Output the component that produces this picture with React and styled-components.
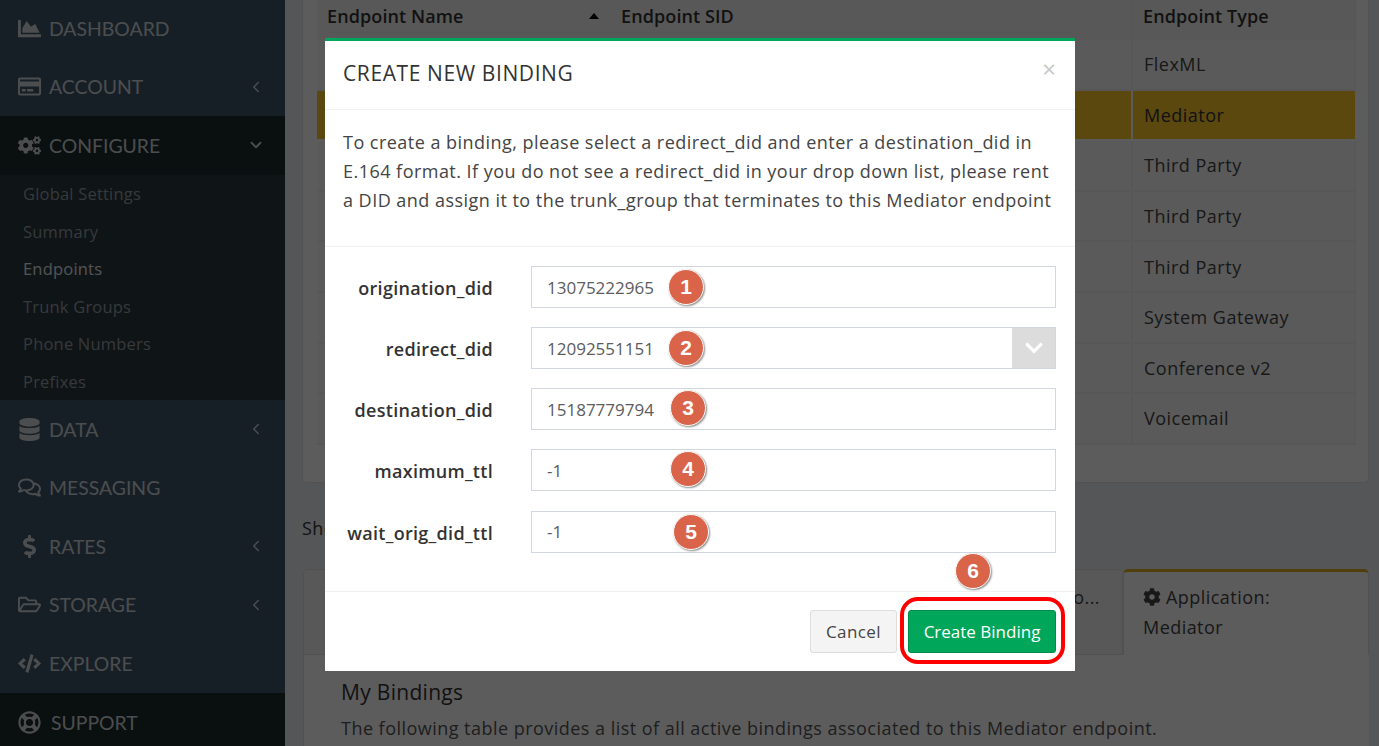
import React from 'react';
import styled, { createGlobalStyle } from 'styled-components';
import {
  FaChartArea, FaRegCreditCard, FaCogs, FaDatabase, FaRegComments, FaDollarSign,
  FaRegFolderOpen, FaCode, FaRegLifeRing, FaCog, FaChevronDown,
} from 'react-icons/fa';
import { ChevronLeft, ChevronDown } from 'lucide-react';

const Global = createGlobalStyle`
  html, body { margin: 0; height: 100%; overflow: hidden; }
  body { font-family: "Open Sans", Lato, sans-serif; color: #333; background: #eceef1; }
  * { box-sizing: border-box; }
`;

const Page = styled.div`
  display: flex;
  height: 746px;
  overflow: hidden;
`;

const Sidebar = styled.nav`
  width: 285px;
  flex: none;
  height: 747px;
  background: #405669;
  display: flex;
  flex-direction: column;
  margin-top: -1px;
`;

const NavItem = styled.div`
  height: 58.6px;
  flex: none;
  display: flex;
  align-items: center;
  padding: 0 20px 0 18px;
  color: #d0d6da;
  font-family: Lato, sans-serif;
  font-size: 19.4px;
  background: ${(p) => (p.$dark ? '#1e2a2d' : 'transparent')};
`;

const NavIcon = styled.span`
  width: ${(p) => p.$w || 31}px;
  display: flex;
  font-size: 23px;
  svg { display: block; }
`;

const NavLabel = styled.span`
  flex: 1;
`;

const SubList = styled.div`
  background: #2a383f;
  height: 225px;
  flex: none;
`;

const SubItem = styled.div`
  height: 37.5px;
  display: flex;
  align-items: center;
  padding-left: 23px;
  font-size: 16.5px;
  letter-spacing: 0.2px;
  color: ${(p) => (p.$active ? '#e4e6e8' : '#969fa4')};
`;

const Main = styled.main`
  flex: 1;
  min-width: 0;
  padding: 0 10px 0 17px;
`;

const Card = styled.section`
  background: #fff;
  height: 483px;
  border-radius: 0 0 5px 5px;
  border: 1px solid #e4e4e4;
  border-top: 0;
  padding: 0 12px 0 14px;
`;

const Table = styled.div`
  display: grid;
  grid-template-columns: 294px 522px 223px;
`;

const HeadCell = styled.div`
  height: 40px;
  padding: 0 10px 8px;
  display: flex;
  align-items: center;
  justify-content: space-between;
  font-weight: 600;
  font-size: 18px;
  letter-spacing: 0.1px;
  color: #333;
  background: #f4f4f4;
  border-right: 1px solid #eeeeee;
`;

const Sort = styled.span`
  width: 0;
  height: 0;
  border-left: 5px solid transparent;
  border-right: 5px solid transparent;
  border-bottom: 6px solid #000;
  margin-right: 1px;
`;

const Cell = styled.div`
  height: 50.6px;
  padding: 0 11px;
  display: flex;
  align-items: center;
  font-size: 18px;
  letter-spacing: 0.5px;
  color: #444;
  background: ${(p) => (p.$hl ? '#fac82a' : '#fafafa')};
  border-right: 2px solid #f2f2f2;
  border-bottom: 2px solid #f2f2f2;
  ${(p) => p.$hl && 'border-color: #fff; color: #333;'}
  &:nth-child(3n) { border-right-width: 1px; }
`;

const ShowText = styled.div`
  margin-top: 33px;
  height: 24px;
  line-height: 24px;
  font-size: 18px;
  letter-spacing: 0.4px;
`;

const Tabs = styled.div`
  margin-top: 29px;
  display: flex;
  height: 86px;
  margin-left: 1px;
`;

const Tab = styled.div`
  width: ${(p) => p.$w}px;
  padding: ${(p) => (p.$active ? '11px 22px 0 19px' : '13px 22px 0 20px')};
  background: ${(p) => (p.$active ? '#fff' : '#f3f3f3')};
  border: 1px solid #e0e0e0;
  border-top: ${(p) => (p.$active ? '3px solid #e0b020' : '1px solid #e0e0e0')};
  border-bottom: ${(p) => (p.$active ? '0' : '1px solid #e0e0e0')};
  border-radius: 5px 5px 0 0;
  text-align: ${(p) => (p.$right ? 'right' : 'left')};
  font-size: 18px;
  letter-spacing: 0.45px;
  line-height: 29.5px;
  color: #444;
  svg { vertical-align: -2px; margin-right: 5px; font-size: 18px; }
`;

const TabBody = styled.div`
  background: #fff;
  border-left: 1px solid #e0e0e0;
  margin-left: 1px;
  padding: 24px 20px 0 37px;
  height: 100px;
`;

const BodyTitle = styled.div`
  font-size: 21px;
  letter-spacing: 0.3px;
  line-height: 26px;
`;

const BodyText = styled.div`
  margin-top: 10px;
  font-size: 18px;
  letter-spacing: 0.47px;
  line-height: 26px;
  white-space: nowrap;
  color: #555;
`;

const Backdrop = styled.div`
  position: fixed;
  inset: 0;
  background: rgba(0, 0, 0, 0.64);
  padding: 38px 0 0 325px;
`;

const Modal = styled.div`
  width: 750px;
  height: 633px;
  background: #fff;
  border-top: 3px solid #00a65a;
`;

const ModalHead = styled.header`
  height: 69px;
  padding: 0 18px;
  display: flex;
  align-items: center;
  justify-content: space-between;
  border-bottom: 1px solid #f0f0f0;
`;

const ModalTitle = styled.h4`
  margin: 0 0 4px;
  font-weight: 400;
  font-size: 21px;
  letter-spacing: 0.6px;
  color: #333;
`;

const Close = styled.span`
  font-size: 24px;
  color: #c8c8c8;
  margin: 0 1px 14px 0;
`;

const Intro = styled.p`
  margin: 0;
  height: 137px;
  padding: 18px 18px 0;
  font-size: 18px;
  letter-spacing: 0.47px;
  line-height: 29px;
  color: #444;
  border-bottom: 1px solid #f0f0f0;
`;

const Form = styled.div`
  height: 345px;
  padding: 19px 19px 0 18px;
  display: flex;
  flex-direction: column;
  gap: 19.15px;
  border-bottom: 1px solid #f0f0f0;
`;

const Row = styled.div`
  display: flex;
  align-items: center;
  gap: 38px;
`;

const Label = styled.label`
  width: 150px;
  flex: none;
  display: flex;
  justify-content: flex-end;
  padding-top: 2px;
  font-weight: 600;
  font-size: 18px;
  letter-spacing: 0.3px;
  white-space: nowrap;
  color: #333;
`;

const Field = styled.div`
  position: relative;
  flex: 1;
  height: 42px;
  border: 1px solid #d2d6de;
  padding-left: 15px;
  display: flex;
  align-items: center;
  font-size: 17px;
  color: #5c5c5c;
`;

const Caret = styled.span`
  position: absolute;
  top: 0;
  right: 0;
  width: 43px;
  height: 40px;
  background: #dcdcdc;
  color: #fff;
  display: flex;
  align-items: center;
  justify-content: center;
  font-size: 20px;
`;

const Badge = styled.span`
  position: absolute;
  left: ${(p) => p.$left}px;
  top: ${(p) => p.$top}px;
  width: 36px;
  height: 36px;
  border-radius: 50%;
  background: #d9644a;
  border: 1px solid #fff;
  box-shadow: 1px 1px 2px rgba(0, 0, 0, 0.45);
  color: #fff;
  font-family: "Liberation Sans", sans-serif;
  font-weight: 700;
  font-size: 21px;
  display: flex;
  align-items: center;
  justify-content: center;
`;

const Footer = styled.footer`
  display: flex;
  justify-content: flex-end;
  gap: 11px;
  padding: 18px 19px 0 0;
`;

const Cancel = styled.button`
  width: 87px;
  height: 43px;
  background: #f4f4f4;
  border: 1px solid #ddd;
  border-radius: 3px;
  font: inherit;
  font-size: 17px;
  letter-spacing: 0.4px;
  color: #444;
`;

const CreateWrap = styled.div`
  position: relative;
`;

const Create = styled.button`
  width: 148px;
  height: 43px;
  background: #00a65a;
  border: 1px solid #008d4c;
  border-radius: 3px;
  font: inherit;
  font-size: 17px;
  color: #fff;
`;

const Ring = styled.span`
  position: absolute;
  left: -8px;
  top: -13px;
  width: 165px;
  height: 67px;
  border: 4px solid #f00;
  border-radius: 18px;
`;

const menuTop = [
  { icon: <FaChartArea />, label: 'DASHBOARD' },
  { icon: <FaRegCreditCard />, label: 'ACCOUNT', arrow: true },
];
const subItems = ['Global Settings', 'Summary', 'Endpoints', 'Trunk Groups', 'Phone Numbers', 'Prefixes'];
const menuBottom = [
  { icon: <FaDatabase />, label: 'DATA', arrow: true },
  { icon: <FaRegComments />, label: 'MESSAGING' },
  { icon: <FaDollarSign />, label: 'RATES', arrow: true },
  { icon: <FaRegFolderOpen />, label: 'STORAGE', arrow: true },
  { icon: <FaCode />, label: 'EXPLORE' },
];
const types = ['FlexML', 'Mediator', 'Third Party', 'Third Party', 'Third Party', 'System Gateway', 'Conference v2', 'Voicemail'];
const fields = [
  { label: 'origination_did', value: '13075222965', badge: 1, left: 136, top: 2 },
  { label: 'redirect_did', value: '12092551151', badge: 2, left: 136, top: 2, select: true },
  { label: 'destination_did', value: '15187779794', badge: 3, left: 138, top: 1 },
  { label: 'maximum_ttl', value: '-1', badge: 4, left: 138, top: 1 },
  { label: 'wait_orig_did_ttl', value: '-1', badge: 5, left: 141, top: 2 },
];

function MenuRow({ item, dark }) {
  return (
    <NavItem $dark={dark}>
      <NavIcon $w={item.iconWidth}>{item.icon}</NavIcon>
      <NavLabel>{item.label}</NavLabel>
      {item.arrow && <ChevronLeft size={18} strokeWidth={2} />}
      {item.down && <ChevronDown size={18} strokeWidth={2.4} />}
    </NavItem>
  );
}

export default function App() {
  return (
    <Page>
      <Global />
      <Sidebar>
        {menuTop.map((m) => <MenuRow key={m.label} item={m} />)}
        <MenuRow dark item={{ icon: <FaCogs />, label: 'CONFIGURE', down: true }} />
        <SubList>
          {subItems.map((s) => <SubItem key={s} $active={s === 'Endpoints'}>{s}</SubItem>)}
        </SubList>
        {menuBottom.map((m) => <MenuRow key={m.label} item={m} />)}
        <MenuRow dark item={{ icon: <FaRegLifeRing />, label: 'SUPPORT', iconWidth: 33 }} />
      </Sidebar>

      <Main>
        <Card>
          <Table>
            <HeadCell>Endpoint Name <Sort /></HeadCell>
            <HeadCell>Endpoint SID</HeadCell>
            <HeadCell>Endpoint Type</HeadCell>
            {types.map((t, i) => (
              <React.Fragment key={i}>
                <Cell $hl={i === 1} />
                <Cell $hl={i === 1} />
                <Cell $hl={i === 1}>{t}</Cell>
              </React.Fragment>
            ))}
          </Table>
        </Card>
        <ShowText>Show</ShowText>
        <Tabs>
          <Tab $w={400}>Details</Tab>
          <Tab $w={420} $right>Endpoint Info...</Tab>
          <Tab $w={246} $active><FaCog />Application:<br />Mediator</Tab>
        </Tabs>
        <TabBody>
          <BodyTitle>My Bindings</BodyTitle>
          <BodyText>The following table provides a list of all active bindings associated to this Mediator endpoint.</BodyText>
        </TabBody>
      </Main>

      <Backdrop>
        <Modal>
          <ModalHead>
            <ModalTitle>CREATE NEW BINDING</ModalTitle>
            <Close>×</Close>
          </ModalHead>
          <Intro>
            To create a binding, please select a redirect_did and enter a destination_did in E.164 format. If you do not see a redirect_did in your drop down list, please rent a DID and assign it to the trunk_group that terminates to this Mediator endpoint
          </Intro>
          <Form>
            {fields.map((f) => (
              <Row key={f.label}>
                <Label>{f.label}</Label>
                <Field>
                  {f.value}
                  {f.select && <Caret><FaChevronDown /></Caret>}
                  <Badge $left={f.left} $top={f.top}>{f.badge}</Badge>
                </Field>
              </Row>
            ))}
          </Form>
          <Footer>
            <Cancel>Cancel</Cancel>
            <CreateWrap>
              <Create>Create Binding</Create>
              <Ring />
              <Badge $left={47} $top={-57}>6</Badge>
            </CreateWrap>
          </Footer>
        </Modal>
      </Backdrop>
    </Page>
  );
}
